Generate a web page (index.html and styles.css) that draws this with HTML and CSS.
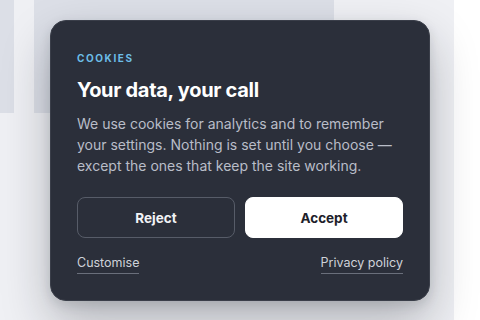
FILE: index.html
```html
<!DOCTYPE html>
<html lang="en">
<head>
<meta charset="utf-8">
<link rel="stylesheet" href="styles.css">
</head>
<body>
<div class="page">
  <div class="backdrop">
    <div class="side"></div>
    <div class="hero"></div>
  </div>
  <section class="card">
    <div class="eyebrow">COOKIES</div>
    <h1 class="title">Your data, your call</h1>
    <p class="body">We use cookies for analytics and to remember your settings. Nothing is set until you choose — except the ones that keep the site working.</p>
    <div class="actions">
      <button class="btn btn-ghost">Reject</button>
      <button class="btn btn-solid">Accept</button>
    </div>
    <div class="links">
      <a class="link">Customise</a>
      <a class="link">Privacy policy</a>
    </div>
  </section>
</div>
</body>
</html>
```
FILE: styles.css
```css
html, body {
  margin: 0;
  padding: 0;
  background: #ffffff;
  width: 480px;
  height: 320px;
  overflow: hidden;
}
.page {
  position: relative;
  width: 454px;
  height: 320px;
  background: #eff0f4;
  font-family: Inter, "Liberation Sans", sans-serif;
}
.backdrop {
  display: flex;
  gap: 20px;
}
.side {
  width: 14px;
  height: 113px;
  background: #dcdfe7;
}
.hero {
  width: 300px;
  height: 113px;
  background: #dcdfe7;
}
.card {
  position: absolute;
  top: 20px;
  left: 50px;
  width: 380px;
  box-sizing: border-box;
  padding: 30px 26px 26px 26px;
  background: #2b2f3a;
  border: 1px solid #3a3e49;
  border-radius: 16px;
  box-shadow: 0 22px 48px rgba(20, 24, 36, 0.28), 0 4px 12px rgba(20, 24, 36, 0.12);
  color: #ffffff;
}
.eyebrow {
  font-size: 10px;
  font-weight: 700;
  letter-spacing: 1.6px;
  color: #6cbde8;
  line-height: 14px;
}
.title {
  margin: 12px 0 0 0;
  font-size: 20px;
  font-weight: 700;
  line-height: 26px;
  letter-spacing: -0.3px;
  color: #ffffff;
}
.body {
  margin: 10px 0 0 0;
  font-size: 14px;
  line-height: 21px;
  color: #b9bdc8;
}
.actions {
  display: grid;
  grid-template-columns: 1fr 1fr;
  gap: 10px;
  margin-top: 21px;
}
.btn {
  height: 41px;
  border-radius: 8px;
  font-family: inherit;
  font-size: 13.5px;
  font-weight: 700;
  cursor: pointer;
}
.btn-ghost {
  background: transparent;
  border: 1px solid #575c68;
  color: #f2f3f6;
}
.btn-solid {
  background: #ffffff;
  border: 1px solid #ffffff;
  color: #1d212a;
}
.links {
  display: flex;
  justify-content: space-between;
  margin-top: 17px;
}
.link {
  font-size: 12.5px;
  line-height: 16px;
  color: #cfd2d9;
  border-bottom: 1px solid #6a6f7b;
  padding-bottom: 2px;
}
```
